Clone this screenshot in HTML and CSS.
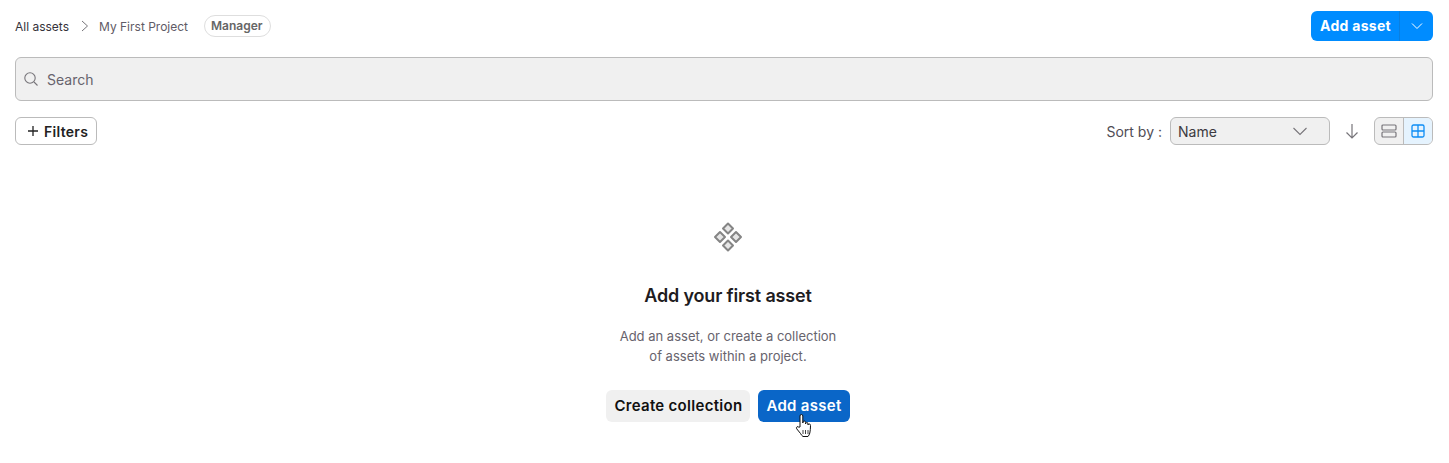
FILE: index.html
```html
<!DOCTYPE html>
<html>
<head>
    <meta charset="UTF-8">
    <title>Assets</title>
    <link rel="stylesheet" href="styles.css">
</head>
<body>
    <div class="page">
        <!-- Top bar -->
        <div class="top-bar">
            <div class="breadcrumbs">
                <span class="crumb-root">All assets</span>
                <svg class="crumb-sep" width="8" height="12" viewBox="0 0 8 12"><path d="M1 1L6.500 6L1 11" fill="none" stroke="#77757a" stroke-width="1"/></svg>
                <span class="crumb">My First Project</span>
                <span class="role-pill">Manager</span>
            </div>
            <div class="split-button">
                <span class="split-main">Add asset</span>
                <span class="split-arrow">
                    <svg width="12" height="8" viewBox="0 0 12 8"><path d="M1 1.500L6 6.500L11 1.500" fill="none" stroke="#fff" stroke-width="1"/></svg>
                </span>
            </div>
        </div>

        <!-- Search -->
        <div class="search-box">
            <svg width="16" height="16" viewBox="0 0 16 16"><circle cx="7" cy="7" r="5.200" fill="none" stroke="#77757a" stroke-width="1.100"/><path d="M11 11L14.500 14.500" stroke="#77757a" stroke-width="1.100"/></svg>
            <span>Search</span>
        </div>

        <!-- Filters and sort -->
        <div class="tool-row">
            <div class="filters-button">
                <svg width="12" height="12" viewBox="0 0 12 12"><path d="M6 1V11M1 6H11" stroke="#222" stroke-width="1.300"/></svg>
                <span>Filters</span>
            </div>
            <div class="sort-controls">
                <span class="sort-label">Sort by :</span>
                <div class="sort-select">
                    <span>Name</span>
                    <svg width="16" height="9" viewBox="0 0 16 9"><path d="M1.500 1L8 7.500L14.500 1" fill="none" stroke="#77757a" stroke-width="1.100"/></svg>
                </div>
                <svg class="sort-direction" width="14" height="16" viewBox="0 0 14 16"><path d="M7 1V15M1.500 9.500L7 15L12.500 9.500" fill="none" stroke="#77757a" stroke-width="1.200"/></svg>
                <div class="view-toggle">
                    <span class="view-option">
                        <svg width="16" height="14" viewBox="0 0 16 14"><rect x="1" y="1" width="14" height="5" rx="1" fill="none" stroke="#77757a" stroke-width="1.200"/><rect x="1" y="8" width="14" height="5" rx="1" fill="none" stroke="#77757a" stroke-width="1.200"/></svg>
                    </span>
                    <span class="view-option active">
                        <svg width="14" height="14" viewBox="0 0 14 14"><rect x="1" y="1" width="12" height="12" rx="1.500" fill="none" stroke="#0d8df5" stroke-width="1.300"/><path d="M7 1V13M1 7H13" stroke="#0d8df5" stroke-width="1.300"/></svg>
                    </span>
                </div>
            </div>
        </div>

        <!-- Empty state -->
        <div class="empty-state">
            <svg class="empty-icon" width="30" height="30" viewBox="0 0 30 30">
                <g fill="#e6e6e6" stroke="#858585" stroke-width="2" stroke-linejoin="round">
                    <path d="M15 1.500L20 6.500L15 11.500L10 6.500Z"/>
                    <path d="M7 10L12 15L7 20L2 15Z"/>
                    <path d="M23 10L28 15L23 20L18 15Z"/>
                    <path d="M15 18.500L20 23.500L15 28.500L10 23.500Z"/>
                </g>
            </svg>
            <h2>Add your first asset</h2>
            <p>Add an asset, or create a collection<br>of assets within a project.</p>
            <div class="empty-actions">
                <span class="btn-secondary">Create collection</span>
                <span class="btn-primary">Add asset
                    <svg class="hand-cursor" width="18" height="25" viewBox="0 0 18 25"><path d="M5 14L5 3Q5 1.500 6.400 1.500Q7.800 1.500 7.800 3L7.800 10L8 9Q8.400 8 9.300 8Q10.500 8 10.500 9.500L10.500 11L10.800 10.300Q11.200 9.500 12 9.500Q13 9.500 13 11L13 12L13.300 11.500Q13.700 11 14.300 11Q15.500 11 15.500 12.500Q15.500 17 14.800 20Q14.300 22 13 23.500L8 23.500Q6.500 22.500 5.500 20.500L1.700 15.800Q1 14.500 2 13.800Q3 13.300 3.800 14.200Z" fill="#fff" stroke="#111" stroke-width="1" stroke-linejoin="round"/><path d="M8 17V21M10.500 17V21M13 17V21" stroke="#111" stroke-width="0.800" fill="none"/></svg>
                </span>
            </div>
        </div>
    </div>
</body>
</html>
```

FILE: styles.css
```css
body {
    margin: 0;
    background-color: #fff;
    font-family: Inter, "Liberation Sans", sans-serif;
    color: #1e1c1f;
}

.page {
    padding: 11px 16px 41px 15px;
}

.top-bar {
    display: flex;
    justify-content: space-between;
    align-items: center;
    height: 30px;
}

.breadcrumbs {
    display: flex;
    align-items: center;
    font-size: 12px;
    color: #5f5b66;
}

.crumb-root {
    color: #35323a;
}

.crumb-sep {
    margin: 0 10px 0 12px;
}

.role-pill {
    margin-left: 16px;
    height: 20px;
    line-height: 20px;
    padding: 0 7px 0 6px;
    border: 1px solid #dedede;
    border-radius: 11px;
    font-weight: 600;
    color: #666;
}

.split-button {
    display: flex;
    height: 30px;
    border-radius: 6px;
    overflow: hidden;
    background-color: #008cff;
    color: #fff;
    font-size: 14px;
    font-weight: 700;
    letter-spacing: 0.3px;
}

.split-main {
    box-sizing: border-box;
    width: 88px;
    padding-left: 1px;
    text-align: center;
    line-height: 30px;
}

.split-arrow {
    display: flex;
    align-items: center;
    justify-content: center;
    width: 33px;
    border-left: 1px solid #0a7fe0;
}

.search-box {
    display: flex;
    align-items: center;
    gap: 8px;
    height: 42px;
    margin-top: 16px;
    padding-left: 7px;
    border: 1px solid #bbb;
    border-radius: 6px;
    background-color: #f0f0f0;
    font-size: 14px;
    color: #67636d;
}

.tool-row {
    display: flex;
    justify-content: space-between;
    align-items: center;
    height: 28px;
    margin-top: 16px;
}

.filters-button {
    display: flex;
    align-items: center;
    gap: 5px;
    height: 26px;
    padding: 0 8px 0 11px;
    border: 1px solid #bbb;
    border-radius: 6px;
    font-size: 14px;
    font-weight: 600;
    letter-spacing: 0.3px;
    color: #222;
}

.sort-controls {
    display: flex;
    align-items: center;
}

.sort-label {
    font-size: 14px;
    color: #4f4c55;
    margin-right: 8px;
}

.sort-select {
    display: flex;
    justify-content: space-between;
    align-items: center;
    box-sizing: border-box;
    width: 160px;
    height: 28px;
    padding: 0 21px 0 7px;
    border: 1px solid #bbb;
    border-radius: 6px;
    background-color: #f0f0f0;
    font-size: 14px;
    color: #3c3a40;
}

.sort-direction {
    margin: 0 15px;
}

.view-toggle {
    display: flex;
    box-sizing: border-box;
    width: 59px;
    height: 28px;
    border: 1px solid #bbb;
    border-radius: 6px;
    overflow: hidden;
    background-color: #f0f0f0;
}

.view-option {
    display: flex;
    align-items: center;
    justify-content: center;
    flex: 1;
}

.view-option.active {
    background-color: #e5f3fe;
    border-left: 1px solid #bbb;
}

.empty-state {
    display: flex;
    flex-direction: column;
    align-items: center;
    margin-top: 77px;
    padding-left: 8px;
    text-align: center;
}

.empty-icon {
    display: block;
}

h2 {
    margin: 32px 0 0 0;
    font-size: 18px;
    line-height: 24px;
    font-weight: 600;
    letter-spacing: -0.15px;
}

.empty-state p {
    margin: 18px 0 0 0;
    font-size: 13px;
    line-height: 20px;
    color: #67636d;
}

.empty-actions {
    display: flex;
    gap: 8px;
    margin-top: 24px;
}

.btn-secondary,
.btn-primary {
    height: 32px;
    line-height: 32px;
    padding: 0 8px;
    border-radius: 6px;
    font-size: 15px;
    font-weight: 600;
    letter-spacing: 0.3px;
}

.btn-secondary {
    background-color: #f0f0f0;
    color: #111;
}

.btn-primary {
    position: relative;
    background-color: #0a66c8;
    color: #fff;
}

/* mouse pointer sitting over the button */
.hand-cursor {
    position: absolute;
    left: 37px;
    top: 23px;
}
```
